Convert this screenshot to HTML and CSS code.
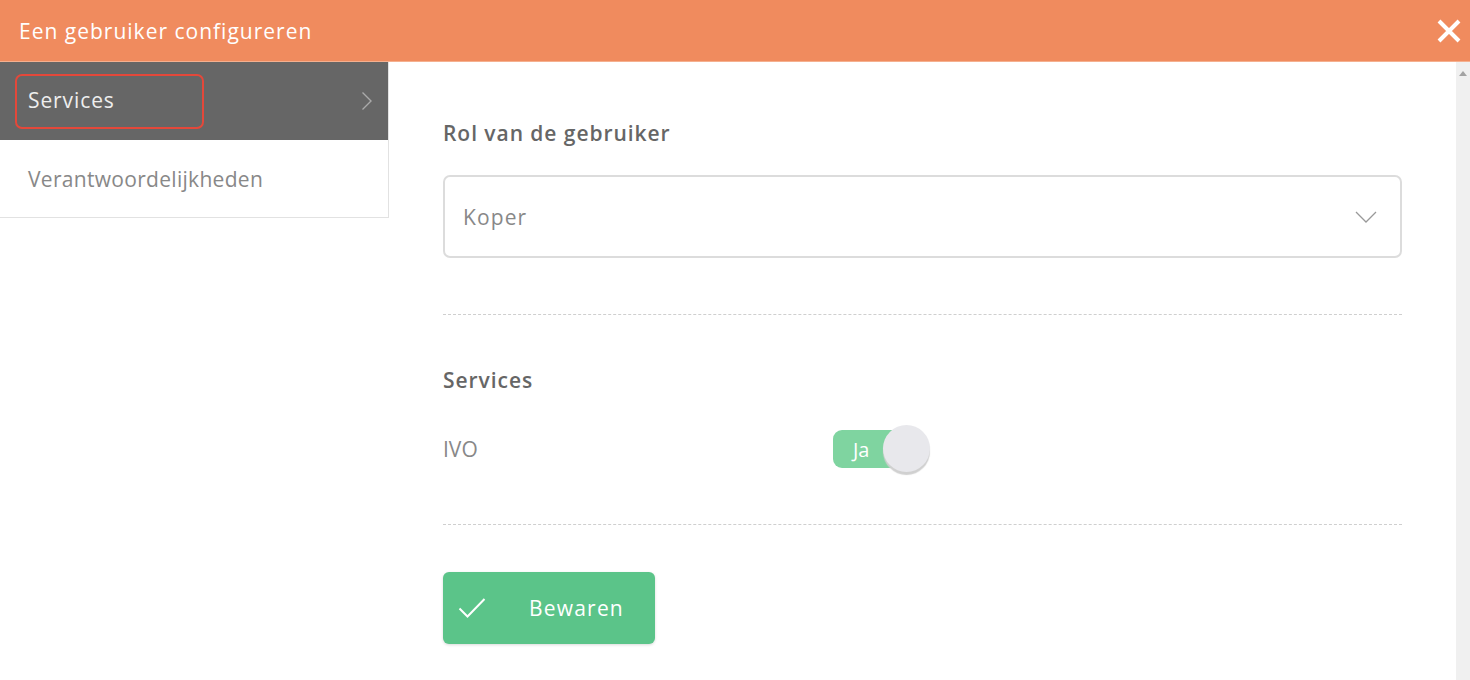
FILE: index.html
```html
<!DOCTYPE html>
<html lang="nl">
<head>
<meta charset="utf-8">
<title>Een gebruiker configureren</title>
<link rel="stylesheet" href="styles.css">
</head>
<body>
<div class="dialog">
  <header class="header">
    <h1 class="title">Een gebruiker configureren</h1>
    <button class="close" aria-label="Sluiten">
      <svg width="26" height="26" viewBox="0 0 26 26"><path d="M3 3 L23 23 M23 3 L3 23" stroke="#fff" stroke-width="4" stroke-linecap="butt"/></svg>
    </button>
  </header>
  <div class="body">
    <nav class="sidebar">
      <a class="nav-item active">
        <span class="nav-label highlighted">Services</span>
        <svg class="nav-chevron" width="12" height="20" viewBox="0 0 12 20"><path d="M1.5 1.5 L10 10 L1.5 18.5" fill="none" stroke="#aaa" stroke-width="1.4"/></svg>
      </a>
      <a class="nav-item">
        <span class="nav-label">Verantwoordelijkheden</span>
      </a>
    </nav>
    <main class="content">
      <section class="section">
        <h2 class="section-title">Rol van de gebruiker</h2>
        <div class="select">
          <span class="select-value">Koper</span>
          <svg width="22" height="12" viewBox="0 0 22 12"><path d="M1 1 L11 11 L21 1" fill="none" stroke="#999" stroke-width="1.3"/></svg>
        </div>
      </section>
      <hr class="divider">
      <section class="section">
        <h2 class="section-title services-title">Services</h2>
        <div class="service-row">
          <span class="service-name">IVO</span>
          <div class="toggle">
            <span class="toggle-label">Ja</span>
            <span class="toggle-knob"></span>
          </div>
        </div>
      </section>
      <hr class="divider">
      <button class="save">
        <svg width="28" height="22" viewBox="0 0 28 22"><path d="M1.5 11.5 L9.5 19.5 L26.5 2" fill="none" stroke="#fff" stroke-width="2"/></svg>
        <span>Bewaren</span>
      </button>
    </main>
    <div class="scrollbar"><span class="scroll-arrow"></span></div>
  </div>
</div>
</body>
</html>
```

FILE: styles.css
```css
* { box-sizing: border-box; }
html, body {
  margin: 0;
  padding: 0;
  height: 100%;
  background: #fff;
  font-family: "Open Sans", "Lato", sans-serif;
}
.dialog {
  height: 680px;
  display: flex;
  flex-direction: column;
  overflow: hidden;
}
.header {
  height: 62px;
  background: #f08b5e;
  display: flex;
  align-items: center;
  justify-content: space-between;
  padding: 0 8px 0 19px;
  border-bottom: 1px solid #f5b08f;
  flex-shrink: 0;
}
.title {
  margin: 0;
  font-size: 21px;
  font-weight: 400;
  color: #fff;
  letter-spacing: 1px;
}
.close {
  background: none;
  border: 0;
  padding: 0;
  width: 26px;
  height: 26px;
  display: flex;
  cursor: pointer;
}
.body {
  flex: 1;
  display: flex;
  min-height: 0;
}
.sidebar {
  width: 389px;
  flex-shrink: 0;
  align-self: flex-start;
  display: flex;
  flex-direction: column;
  border-right: 1px solid #e2e2e2;
  border-bottom: 1px solid #e2e2e2;
}
.nav-item {
  height: 77px;
  display: flex;
  align-items: center;
  justify-content: space-between;
  padding: 0 15px 0 15px;
  font-size: 21px;
  color: #888;
}
.nav-item.active {
  height: 78px;
  background: #666;
  color: #eee;
}
.nav-label {
  padding: 0 13px;
  letter-spacing: 0.3px;
}
.nav-label.highlighted {
  width: 189px;
  height: 55px;
  display: flex;
  align-items: center;
  border: 2px solid #e4483a;
  border-radius: 7px;
  padding: 0 0 2px 11px;
  letter-spacing: 0.9px;
}
.nav-chevron { margin-right: 0; }
.content {
  flex: 1;
  padding: 52px 54px 0 54px;
  display: flex;
  flex-direction: column;
  align-items: flex-start;
}
.section { width: 100%; }
.section-title {
  margin: 0;
  font-size: 21px;
  font-weight: 600;
  color: #666;
  line-height: 38px;
  letter-spacing: 0.95px;
}
.select {
  margin-top: 23px;
  height: 83px;
  border: 2px solid #dcdcdc;
  border-radius: 7px;
  display: flex;
  align-items: center;
  justify-content: space-between;
  padding: 0 23px 0 18px;
}
.select-value {
  font-size: 21px;
  color: #888;
  letter-spacing: 1.1px;
}
.divider {
  width: 100%;
  margin: 0;
  border: 0;
  border-top: 1px dashed #cfcfcf;
}
.section + .divider { margin-top: 56px; }
.services-title { margin-top: 46px; }
.service-row {
  display: flex;
  align-items: center;
  margin-top: 26px;
  height: 48px;
}
.service-name {
  width: 390px;
  font-size: 21px;
  color: #888;
  letter-spacing: 0px;
}
.toggle {
  position: relative;
  width: 72px;
  height: 38px;
  background: #7fd4a0;
  border-radius: 9px;
  display: flex;
  align-items: center;
  padding-left: 20px;
}
.toggle-label {
  color: #fff;
  font-size: 20px;
}
.toggle-knob {
  position: absolute;
  left: 50px;
  top: -5px;
  width: 47px;
  height: 47px;
  border-radius: 50%;
  background: #e8e8ec;
  box-shadow: 0 3px 1px #d0d0d0;
}
.divider + .section + .divider { margin-top: 51px; }
.save {
  margin-top: 47px;
  width: 212px;
  height: 72px;
  background: #5bc489;
  border: 0;
  border-radius: 6px;
  box-shadow: 0 1px 3px rgba(0,0,0,0.15);
  display: flex;
  align-items: center;
  padding: 0 0 0 15px;
  color: #fff;
  font-family: inherit;
  font-size: 21px;
  letter-spacing: 1.2px;
  cursor: pointer;
}
.save span { margin-left: 43px; }
.scrollbar {
  width: 14px;
  flex-shrink: 0;
  background: #f0f0f0;
  position: relative;
}
.scroll-arrow {
  position: absolute;
  top: 9px;
  left: 3px;
  width: 0;
  height: 0;
  border-left: 4px solid transparent;
  border-right: 4px solid transparent;
  border-bottom: 5px solid #a3a3a3;
}
```
